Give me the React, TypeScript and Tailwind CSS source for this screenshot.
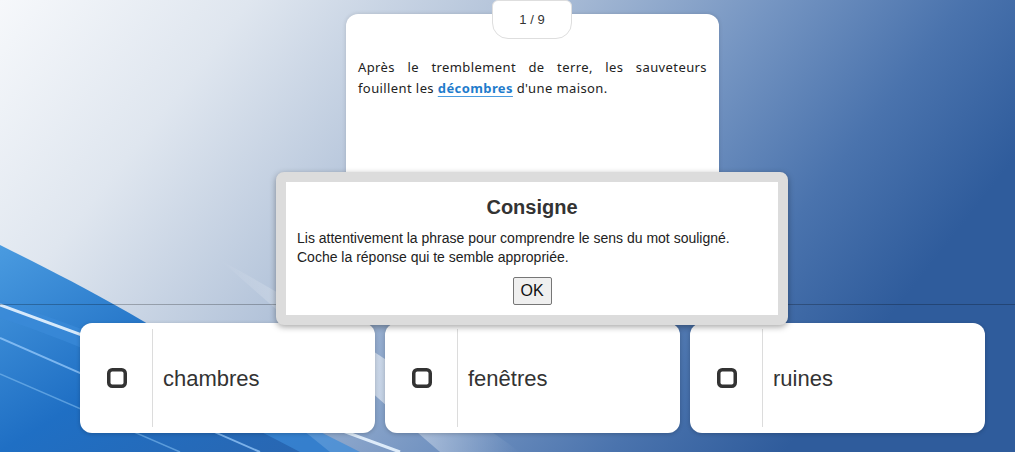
const ANSWERS = ["chambres", "fenêtres", "ruines"];

function Wallpaper() {
  return (
    <svg
      className="absolute inset-0 h-full w-full"
      viewBox="0 0 1015 452"
      preserveAspectRatio="none"
    >
      <defs>
        <linearGradient id="sky" x1="0" y1="0" x2="1" y2="0.35">
          <stop offset="0" stopColor="#f6f8fb" />
          <stop offset="0.22" stopColor="#dfe6ef" />
          <stop offset="0.45" stopColor="#b4c4da" />
          <stop offset="0.68" stopColor="#7595c2" />
          <stop offset="0.85" stopColor="#4a73ad" />
          <stop offset="1" stopColor="#2f5c9c" />
        </linearGradient>
        <linearGradient id="wave" x1="0" y1="0" x2="1" y2="1">
          <stop offset="0" stopColor="#4a9be0" />
          <stop offset="0.5" stopColor="#1f6fc4" />
          <stop offset="1" stopColor="#2a66b0" />
        </linearGradient>
        <linearGradient id="glow" x1="0" y1="0" x2="1" y2="0">
          <stop offset="0" stopColor="#ffffff" stopOpacity="0" />
          <stop offset="0.5" stopColor="#ffffff" stopOpacity="0.9" />
          <stop offset="1" stopColor="#ffffff" stopOpacity="0" />
        </linearGradient>
      </defs>
      <rect width="1015" height="452" fill="url(#sky)" />
      <path d="M0 245 C 90 290 200 345 330 452 L 0 452 Z" fill="url(#wave)" />
      <path d="M0 300 C 120 340 260 400 360 452 L 300 452 C 200 400 100 350 0 318 Z" fill="#3b8ad8" opacity="0.7" />
      <path d="M0 305 L 400 452" stroke="#e8f4ff" strokeWidth="3" opacity="0.9" />
      <path d="M0 338 L 260 452" stroke="#9fd0ff" strokeWidth="2" opacity="0.7" />
      <path d="M0 374 L 180 452" stroke="#7fbcf0" strokeWidth="1.5" opacity="0.6" />
      <path d="M220 260 C 300 330 380 400 440 452 L 520 452 C 420 380 330 320 220 260 Z" fill="url(#glow)" opacity="0.6" />
    </svg>
  );
}

function CheckBox() {
  return (
    <svg width="20" height="20" viewBox="0 0 20 20">
      <rect x="1.75" y="1.75" width="16.5" height="16.5" rx="3.5" fill="none" stroke="#333" strokeWidth="3.5" />
    </svg>
  );
}

export default function App() {
  return (
    <div className="relative h-[452px] w-full overflow-hidden">
      <Wallpaper />

      <div className="relative flex h-[305px] justify-center border-b border-black/25 pl-[50px] pt-[14px]">
        <div className="relative w-[373px] rounded-t-xl bg-white px-3 pt-[43px] shadow-[0_0_4px_rgba(0,0,0,0.15)]">
          <div className="absolute left-[146px] top-[-14px] flex h-[39px] w-[80px] items-center justify-center rounded-b-2xl rounded-t-md border border-[#dedede] bg-white font-['Liberation_Sans',Arial,sans-serif] text-[13px] text-[#333]">
            1 / 9
          </div>
          <p className="text-justify font-['Noto_Sans',sans-serif] text-[13px] leading-[21px] tracking-[0.4px] text-[#222] [text-align-last:left]">
            Après le tremblement de terre, les sauveteurs fouillent les{" "}
            <span className="font-bold text-[#1f7ccc] underline decoration-[#4a9ce0] underline-offset-[3px]">décombres</span>{" "}
            d'une maison.
          </p>
        </div>
      </div>

      <div className="relative flex gap-[10px] pl-[80px] pt-[18px]">
        {ANSWERS.map((word) => (
          <div
            key={word}
            className="flex h-[110px] w-[295px] items-stretch rounded-xl bg-white py-[6px] shadow-[0_1px_4px_rgba(0,0,0,0.2)]"
          >
            <div className="flex w-[73px] items-center justify-center border-r border-[#dcdcdc] pl-[2px]">
              <CheckBox />
            </div>
            <div className="flex items-center pl-[10px] font-['Liberation_Sans',Arial,sans-serif] text-[22px] text-[#333]">
              {word}
            </div>
          </div>
        ))}
      </div>

      <div className="absolute left-[276px] top-[172px] w-[512px] rounded-lg border-[10px] border-[#dcdcdc] bg-white font-['Liberation_Sans',Arial,sans-serif] text-[#222] shadow-[0_2px_6px_rgba(0,0,0,0.35)]">
        <div className="flex h-[133px] flex-col px-[11px] pt-[12px]">
          <h2 className="text-center text-[20px] font-bold leading-[26px] text-[#333]">Consigne</h2>
          <p className="mt-[9px] text-[14px] leading-[19px]">
            Lis attentivement la phrase pour comprendre le sens du mot souligné.
            <br />
            Coche la réponse qui te semble appropriée.
          </p>
          <div className="mt-[10px] flex justify-center">
            <button className="h-[28px] w-[39px] rounded-[2px] border border-[#767676] bg-[#efefef] text-[16px] text-[#111]">
              OK
            </button>
          </div>
        </div>
      </div>
    </div>
  );
}
